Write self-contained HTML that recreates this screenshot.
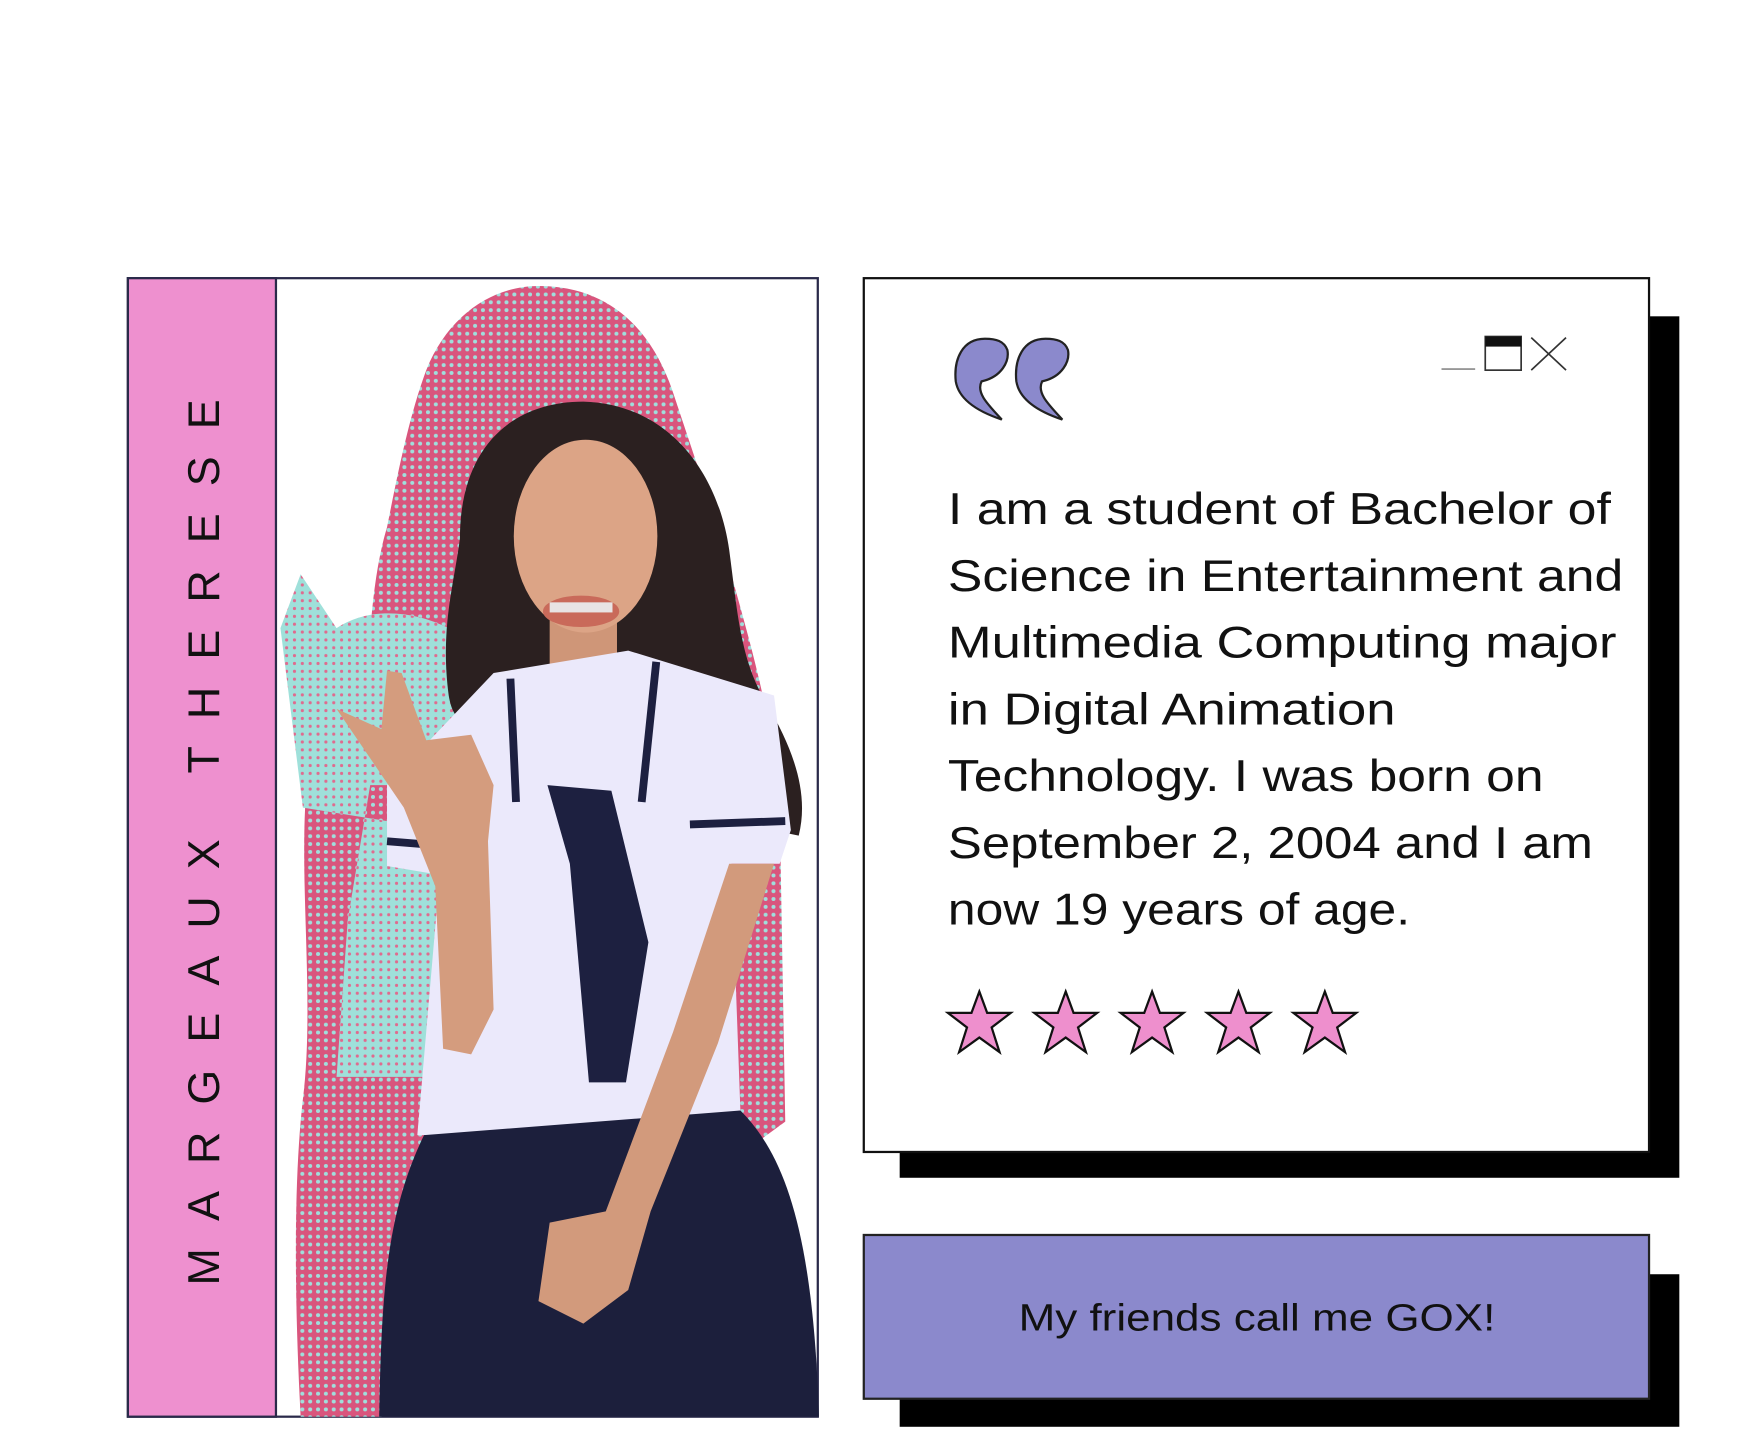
<!DOCTYPE html>
<html><head><meta charset="utf-8"><style>
html,body{margin:0;padding:0;background:#fff;width:1750px;height:1438px;overflow:hidden}
svg{display:block}
</style></head><body>
<svg width="1750" height="1438" viewBox="0 0 1560 1282" preserveAspectRatio="none" xmlns="http://www.w3.org/2000/svg">
<defs>
<pattern id="hp" width="7" height="7" patternUnits="userSpaceOnUse"><rect width="7" height="7" fill="#d9557d"/><circle cx="3.5" cy="3.5" r="1.8" fill="#9fdfdc"/></pattern>
<pattern id="ht" width="7" height="7" patternUnits="userSpaceOnUse"><rect width="7" height="7" fill="#9fe0da"/><circle cx="3.5" cy="3.5" r="1.4" fill="#e06a8e"/></pattern>
</defs>
<rect width="1560" height="1282" fill="#fff"/>

<rect x="114" y="248" width="615" height="1015" fill="#fff" stroke="#2a2a4a" stroke-width="2"/>
<path d="M380,330 C400,280 440,255 480,255 C540,255 580,290 600,350 L640,470 C665,560 690,640 695,720 L700,1000 L340,1263 L268,1263 C262,1150 262,1050 270,980 C280,900 268,800 272,720 L330,690 C325,600 330,520 345,470 C355,420 365,370 380,330Z" fill="url(#hp)"/>
<path d="M250,560 L268,512 L300,560 C330,540 370,545 400,560 L410,700 L330,700 L310,820 L300,960 L390,960 L395,740 L270,720 Z" fill="url(#ht)"/>
<!-- hair -->
<path d="M410,480 C410,400 455,358 520,358 C595,360 640,420 650,490 C658,550 660,590 685,630 C705,665 722,705 712,745 L640,730 L560,600 L450,610 C420,650 405,650 400,620 C392,560 405,520 410,480Z" fill="#2b2020"/>
<rect x="490" y="540" width="60" height="80" fill="#cf9678"/>
<ellipse cx="522" cy="478" rx="64" ry="86" fill="#dca486"/>
<ellipse cx="518" cy="545" rx="34" ry="14" fill="#c96a5a"/>
<rect x="490" y="537" width="56" height="9" fill="#e8e4e4"/>
<path d="M345,700 L440,600 L560,580 L690,620 L705,740 L695,770 L652,770 L660,990 L560,1010 L372,1012 L392,780 L345,772Z" fill="#ebe9fb"/>
<path d="M345,750 L395,754 M615,735 L700,732" stroke="#1d2040" stroke-width="7"/>
<path d="M455,605 L460,715 M585,590 L572,715" stroke="#1d2040" stroke-width="7" fill="none"/>
<path d="M488,700 L545,705 L578,840 L558,965 L525,965 L508,770Z" fill="#1d2040"/>
<path d="M338,1263 C340,1150 345,1080 378,1012 L660,990 C700,1030 725,1100 730,1263Z" fill="#1c1f3c"/>
<path d="M300,632 L340,650 L345,598 L358,600 L380,660 L420,655 L440,700 L435,750 L440,900 L420,940 L395,935 L388,790 L360,720Z" fill="#d49c7e"/>
<path d="M650,770 L690,770 L640,930 L580,1080 L560,1150 L520,1180 L480,1160 L490,1090 L540,1080 L600,920Z" fill="#d29a7c"/>

<rect x="114" y="248" width="132" height="1015" fill="#ee90cf" stroke="#2a2a4a" stroke-width="2"/>
<text transform="translate(195,1146) rotate(-90)" x="0" y="0" font-family="Liberation Sans, sans-serif" font-size="40" fill="#111" textLength="790" lengthAdjust="spacing">MARGEAUX THERESE</text>

<rect x="802" y="282" width="695" height="768" fill="#000"/>
<rect x="770" y="248" width="700" height="779" fill="#fff" stroke="#111" stroke-width="2"/>
<g fill="#8b89cc" stroke="#222" stroke-width="2">
<path d="M878,302 C858,302 850,320 852,340 C855,358 875,368 893,374 C880,360 870,350 875,340 C893,336 900,322 898,312 C895,304 888,302 878,302Z"/>
<path d="M932,302 C912,302 904,320 906,340 C909,358 929,368 947,374 C934,360 924,350 929,340 C947,336 954,322 952,312 C949,304 942,302 932,302Z"/>
</g>
<line x1="1285" y1="329" x2="1315" y2="329" stroke="#888" stroke-width="1.5"/>
<rect x="1324" y="300" width="32" height="30" fill="#fff" stroke="#333" stroke-width="1.5"/>
<rect x="1324" y="300" width="32" height="9" fill="#111"/>
<path d="M1365,301 L1396,330 M1396,301 L1365,330" stroke="#333" stroke-width="1.5"/>

<g font-family="Liberation Sans, sans-serif" font-size="40" fill="#111">
<text x="845" y="467" textLength="591" lengthAdjust="spacingAndGlyphs">I am a student of Bachelor of</text>
<text x="845" y="527" textLength="602" lengthAdjust="spacingAndGlyphs">Science in Entertainment and</text>
<text x="845" y="586" textLength="596" lengthAdjust="spacingAndGlyphs">Multimedia Computing major</text>
<text x="845" y="646" textLength="399" lengthAdjust="spacingAndGlyphs">in Digital Animation</text>
<text x="845" y="705" textLength="531" lengthAdjust="spacingAndGlyphs">Technology. I was born on</text>
<text x="845" y="765" textLength="575" lengthAdjust="spacingAndGlyphs">September 2, 2004 and I am</text>
<text x="845" y="824" textLength="412" lengthAdjust="spacingAndGlyphs">now 19 years of age.</text>
</g>

<g fill="#ee8fcd" stroke="#111" stroke-width="2">
<path id="s" d="M873,884 L880,903 L901,903 L884,916 L891,938 L873,925 L855,938 L862,916 L845,903 L866,903Z"/>
<use href="#s" x="77"/><use href="#s" x="154"/><use href="#s" x="231"/><use href="#s" x="308"/>
</g>

<rect x="802" y="1136" width="695" height="136" fill="#000"/>
<rect x="770" y="1101" width="700" height="146" fill="#8b89cc" stroke="#222" stroke-width="2"/>
<text x="908" y="1186" font-family="Liberation Sans, sans-serif" font-size="34" fill="#111" textLength="425" lengthAdjust="spacingAndGlyphs">My friends call me GOX!</text>
</svg>
</body></html>
